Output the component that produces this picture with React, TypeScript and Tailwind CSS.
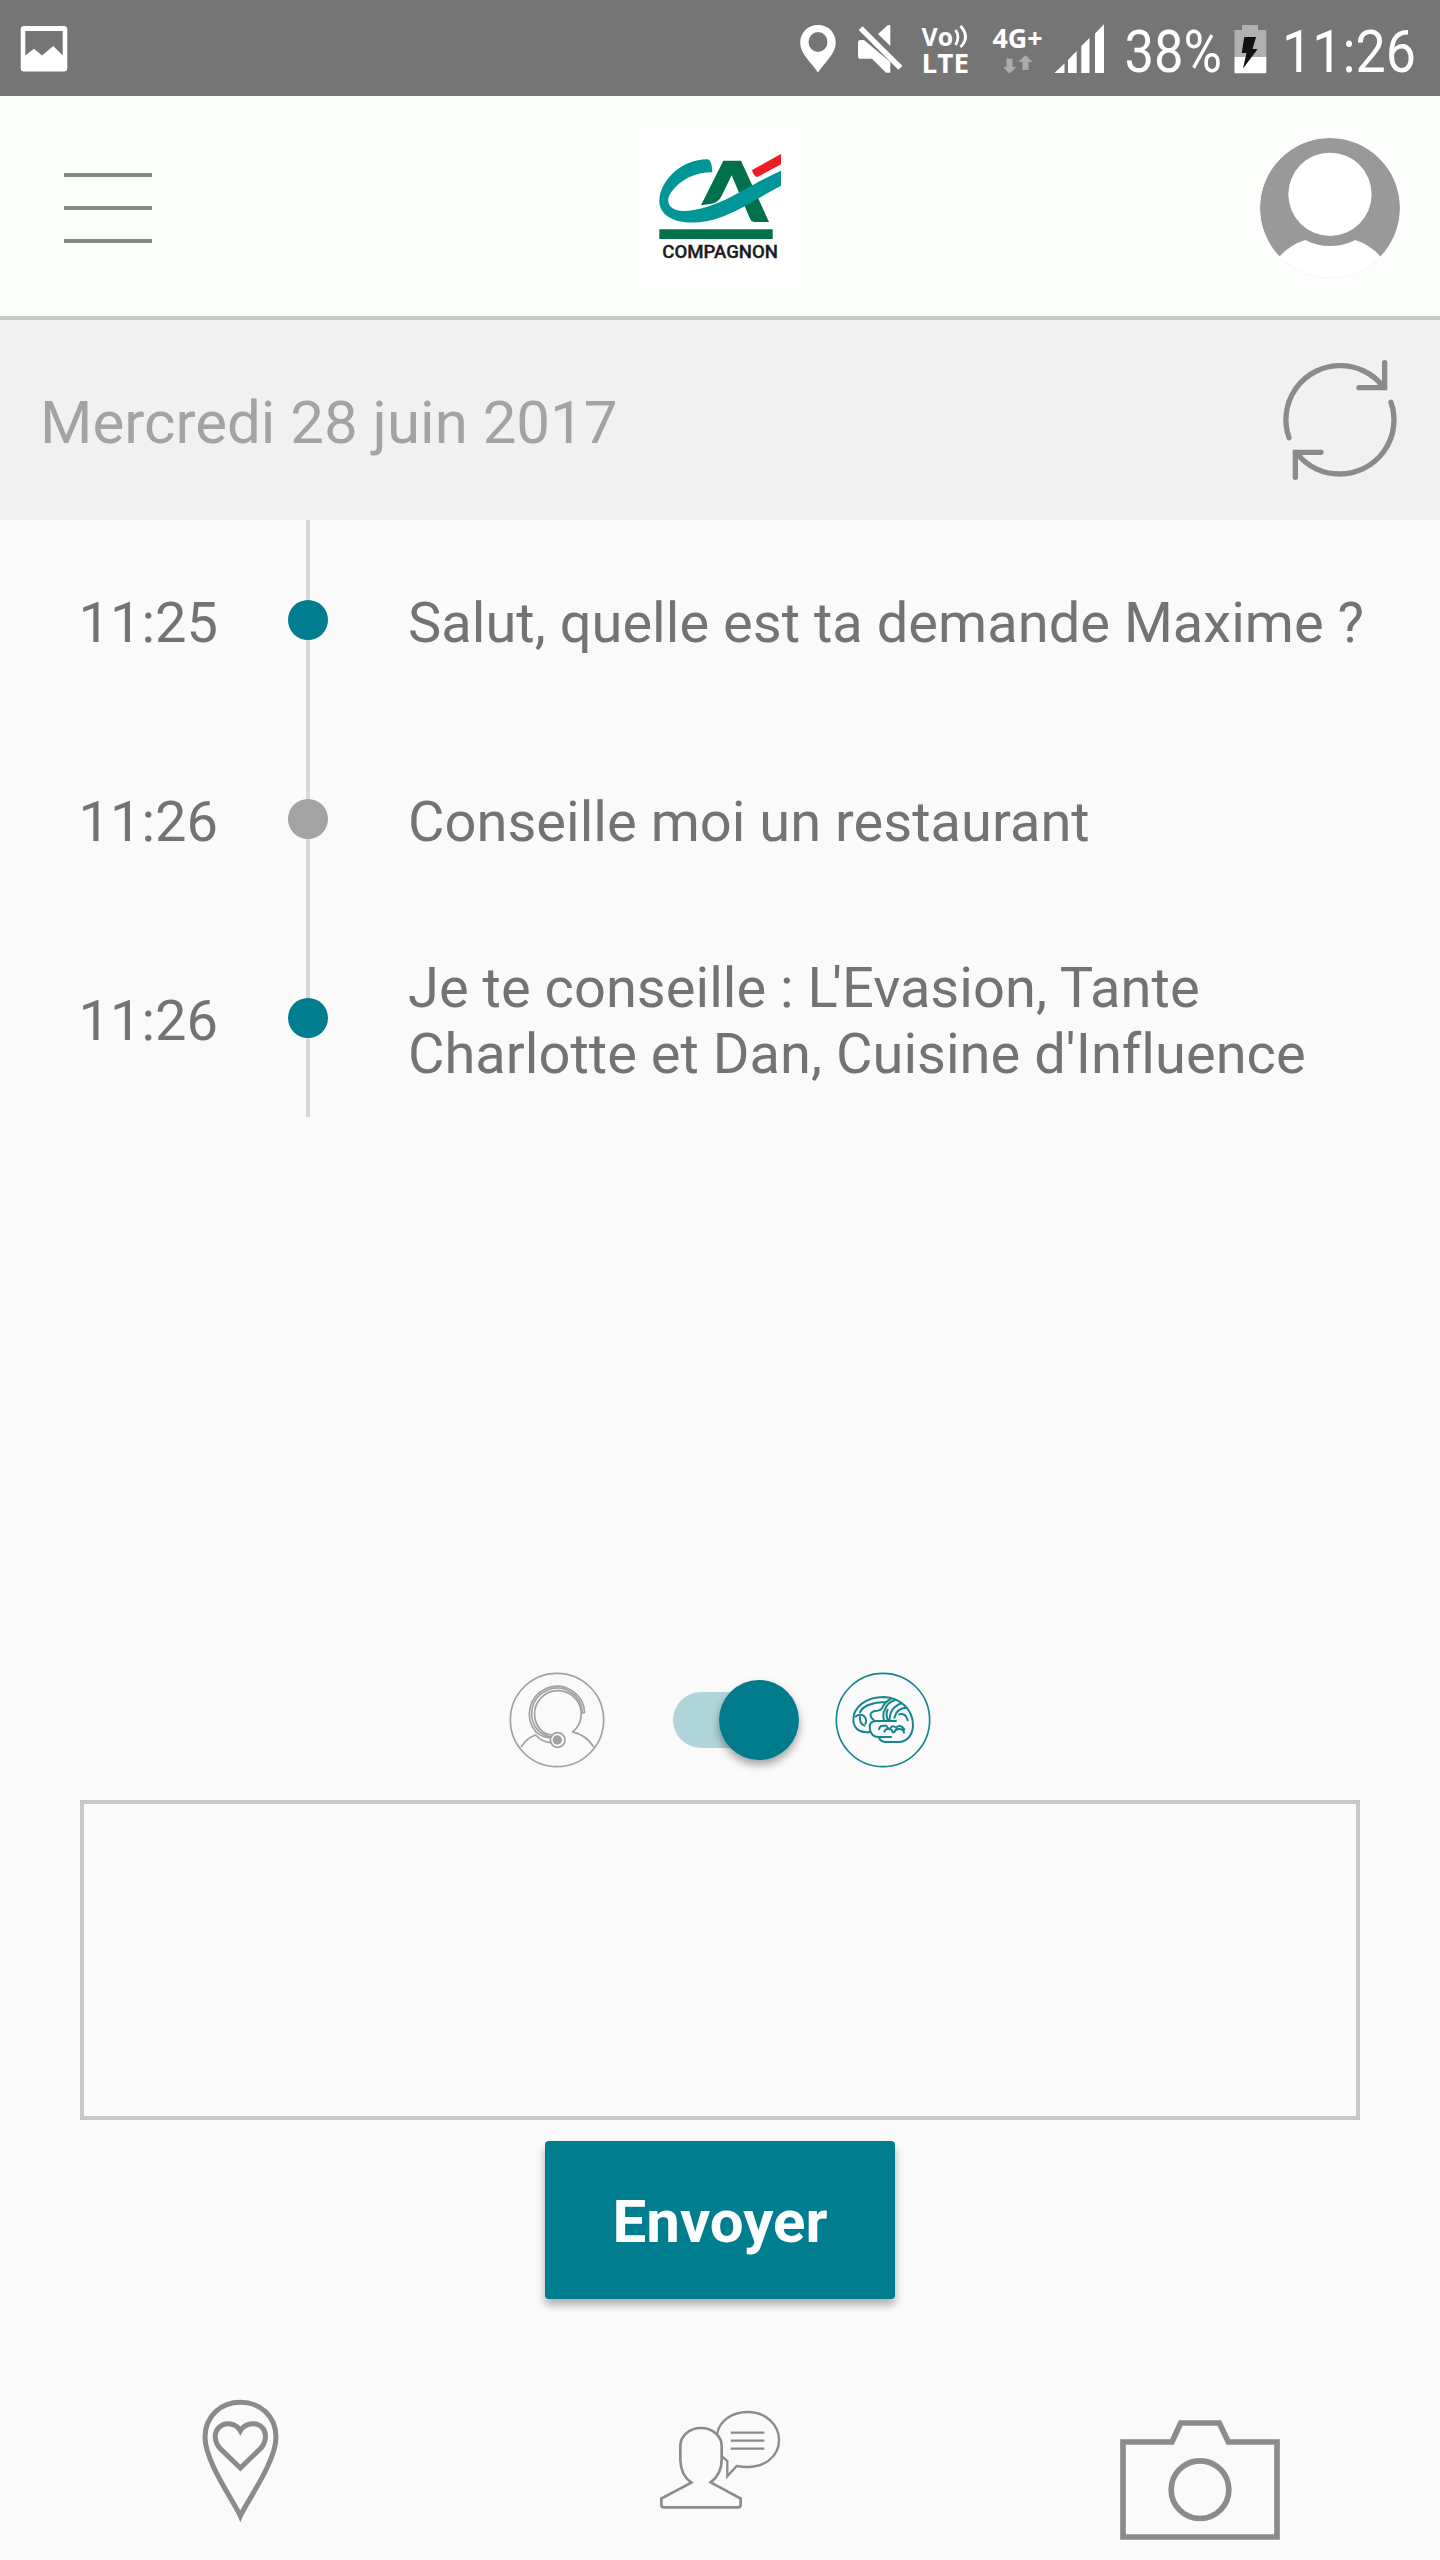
import React from "react";

const messages = [
  { time: "11:25", lines: ["Salut, quelle est ta demande Maxime ?"], bot: true },
  { time: "11:26", lines: ["Conseille moi un restaurant"], bot: false },
  {
    time: "11:26",
    lines: [
      <>
        Je te conseille : <span className="tracking-[-0.1em]">L</span>'Evasion, Tante
      </>,
      "Charlotte et Dan, Cuisine d'Influence",
    ],
    bot: true,
  },
];

function StatusBar() {
  return (
    <div className="flex h-24 shrink-0 items-center justify-between bg-[#757575]">
      <svg className="h-24 w-24" viewBox="0 0 96 96" fill="#fff">
        <path fillRule="evenodd" d="M24 26H64Q67.3 26 67.3 29.500V68Q67.3 71.500 64 71.500H24Q20.700 71.500 20.700 68V29.500Q20.700 26 24 26ZM25.300 31V55.500L34 48.700L42 55.500L53.300 46L62.700 55.500V31Z" />
      </svg>
      <svg className="h-24 w-[660px]" viewBox="780 0 660 96" fill="#fff">
        <path fillRule="evenodd" d="M818 25C807 25 800.200 33 800.200 43C800.200 54 812 63 818 72.500C824 63 835.700 54 835.700 43C835.700 33 829 25 818 25ZM818 32A9.500 10 0 1 1 818 52A9.500 10 0 1 1 818 32Z" />
        <path d="M858.700 30L862.500 26.300L902.500 66L898.300 69.700Z" />
        <path d="M878 34L888 25H890.300V46Z" />
        <path d="M864 40H860Q858 40 858 42.500V56.500Q858 58.700 860 58.700H872L886 72.700H890.300V62Z" />
        <g fontFamily="'Open Sans', 'Noto Sans', sans-serif" fontWeight="700">
          <text x="921.500" y="46" fontSize="24.500" textLength="31.500" lengthAdjust="spacingAndGlyphs">Vo</text>
          <text x="921.500" y="72.700" fontSize="27" textLength="47.500" lengthAdjust="spacingAndGlyphs">LTE</text>
          <text x="992.500" y="47.700" fontSize="26.500" textLength="50" lengthAdjust="spacingAndGlyphs">4G+</text>
        </g>
        <path d="M955.500 30Q960.500 37 955.500 45M960.500 26Q970.500 37 960.500 47" fill="none" stroke="#fff" strokeWidth="2.800" />
        <path fill="#acacac" d="M1006.500 58.500H1012.500V67H1016.500L1009.500 73.500L1003 67H1006.500ZM1022.500 70V62H1018L1025.500 55.300L1032.500 62H1028.500V70Z" />
        <path d="M1054.400 73L1064.500 63.500V73ZM1068 60L1076.700 51V73H1068ZM1081.300 46L1089.500 38V73H1081.300ZM1095 33.500L1104 24.300V73H1095Z" />
        <g fontFamily="Roboto, sans-serif" fontSize="60">
          <text x="1124.500" y="71.700" textLength="97.500" lengthAdjust="spacingAndGlyphs">38%</text>
          <text x="1282" y="71.700" textLength="134" lengthAdjust="spacingAndGlyphs">11:26</text>
        </g>
        <path fill="#b0b0b0" d="M1242 25H1258V30H1266.300V57H1234.500V30H1242Z" />
        <path d="M1234.500 57H1266.300V73.300H1234.500Z" />
        <path fill="#111" d="M1244.300 37H1256L1252.600 49H1257.700L1243 68.500L1246.500 53H1241.700Z" />
      </svg>
    </div>
  );
}

function Logo() {
  return (
    <svg className="h-40 w-40 bg-white" viewBox="30 24 480 480">
      <path fill="#00704d" d="M280 122H333L417 306H372Q364 305 360 296L305 166L275 227Q265 249 240 252L213 256Z" />
      <path fill="#009597" d="M234 118Q246 122 247 157C195 157 152 178 124 216C104 244 116 272 160 273C205 273 258 254 308 228C342 210 400 176 453 152V197C375 238 310 287 230 304C150 317 88 294 88 242C90 178 160 116 234 118Z" />
      <path fill="#ed1c24" d="M366 150L453 102V133L384 170Q373 174 366 150Z" />
      <path fill="#00704d" d="M88 328H428V357H88Z" />
      <text x="97" y="414" fontFamily="Roboto, sans-serif" fontWeight="500" fontSize="53" fill="#1c1c1c" stroke="#1c1c1c" strokeWidth="1" textLength="347" lengthAdjust="spacingAndGlyphs">COMPAGNON</text>
    </svg>
  );
}

function Header() {
  return (
    <header className="grid h-56 shrink-0 grid-cols-3 items-center border-b-4 border-[#c8cac6] bg-[#fcfefb]">
      <div className="mt-1 ml-16 flex w-[88px] flex-col gap-[29px]">
        <div className="h-1 bg-[#868984]" />
        <div className="h-1 bg-[#868984]" />
        <div className="h-1 bg-[#868984]" />
      </div>
      <div className="justify-self-center pt-1">
        <Logo />
      </div>
      <svg className="mt-1 mr-10 h-[140px] w-[140px] justify-self-end" viewBox="120 90 420 420">
        <clipPath id="disc"><circle cx="330" cy="300" r="210" /></clipPath>
        <g clipPath="url(#disc)">
          <circle cx="330" cy="300" r="210" fill="#999" />
          <path fill="#fff" d="M178 446Q210 410 256 396Q290 414 330 414Q370 414 406 396Q450 410 482 446L540 520H120Z" />
          <circle cx="330" cy="259" r="125" fill="#fff" />
        </g>
      </svg>
    </header>
  );
}

function DateBar() {
  return (
    <div className="flex h-[200px] shrink-0 items-center justify-between bg-[#f1f1f1] pr-10 pl-10">
      <span className="pt-[6px] text-[60px] leading-[70px] text-[#a3a3a3]">Mercredi 28 juin 2017</span>
      <svg className="h-[120px] w-[120px]" viewBox="180 750 360 360" fill="none" stroke="#8b8b8b" strokeWidth="16" strokeLinecap="round">
        <path d="M207 983A162 162 0 0 1 360 767A162 162 0 0 1 489 829M513 877A162 162 0 0 1 360 1092A162 162 0 0 1 231 1031" />
        <path d="M494 758V833H417M226 1102V1027H303" />
      </svg>
    </div>
  );
}

function Timeline() {
  return (
    <main className="flex-1">
      {messages.map((m, i) => (
        <div key={i} className="flex h-[199px] text-[56px] leading-[66px] text-[#737373]">
          <div className="flex w-72 items-center justify-end pt-[6px] pr-[70px]">{m.time}</div>
          <div className="relative flex w-10 items-center justify-center">
            <div className="h-full w-1 bg-[#d8d8d8]" />
            <div className={m.bot ? "absolute size-10 rounded-full bg-[#007d8f]" : "absolute size-10 rounded-full bg-[#a3a3a3]"} />
          </div>
          <div className="flex flex-col justify-center pt-[6px] pl-20 tracking-[0.03px] whitespace-nowrap">
            {m.lines.map((line, j) => (
              <p key={j}>{line}</p>
            ))}
          </div>
        </div>
      ))}
    </main>
  );
}

function AdvisorIcon() {
  return (
    <svg className="size-24" viewBox="58 67 288 288" fill="none" stroke="#a0a0a0" strokeWidth="5">
      <circle cx="202" cy="211" r="140" />
      <path d="M285 190A83 83 0 1 0 140 248Q160 264 184 264M277 190H285M278 190A76 76 0 1 0 148 245Q166 259 186 262" />
      <path d="M248 248A70 70 0 1 0 160 247Q172 256 187 256" />
      <circle cx="204" cy="271" r="22" />
      <circle cx="203" cy="271" r="14" fill="#a0a0a0" stroke="none" />
      <path d="M94 292Q112 264 138 256Q158 278 183 279M247 246Q291 257 312 292" />
    </svg>
  );
}

function BrainIcon() {
  return (
    <svg className="size-24" viewBox="1036 67 288 288" fill="none" stroke="#15858f" strokeWidth="6" strokeLinecap="round" strokeLinejoin="round">
      <circle cx="1180" cy="211" r="140" strokeWidth="5" />
      <path d="M1140 247C1112 251 1092 238 1091 212C1090 172 1130 142 1182 142C1234 144 1270 182 1270 226C1270 256 1252 277 1226 277H1190Q1172 277 1168 264" />
      <path d="M1204 262H1166Q1145 262 1141 240Q1136 214 1160 214H1219" />
      <path d="M1111 188Q1118 171 1145 163Q1165 156 1186 158M1098 201Q1108 191 1122 198Q1134 209 1127 222M1111 202Q1109 222 1124 228" />
      <path d="M1203 148Q1184 158 1178 174Q1172 184 1154 184Q1136 190 1146 205L1154 213" />
      <path d="M1216 151Q1190 160 1185 182Q1178 193 1183 212M1194 180Q1187 195 1195 213M1236 160Q1207 172 1202 194L1199 211" />
      <path d="M1250 174Q1222 175 1214 204M1228 194Q1248 188 1254 212" />
      <path d="M1168 239Q1171 226 1182 229Q1191 224 1195 237M1184 246Q1187 237 1197 237Q1207 238 1209 248M1202 235Q1210 225 1219 234Q1232 222 1244 239M1213 248Q1218 236 1231 238Q1242 239 1243 249" />
    </svg>
  );
}

function ModeSwitch() {
  return (
    <div className="flex h-24 items-center pl-[509px]">
      <AdvisorIcon />
      <div className="relative ml-[68px] h-14 w-[126px]">
        <div className="h-14 w-[110px] rounded-full bg-[#afd4d9]" />
        <div className="absolute -top-3 left-[46px] size-20 rounded-full bg-[#007b8c] shadow-[0_5px_8px_rgba(0,0,0,0.35)]" />
      </div>
      <div className="ml-9">
        <BrainIcon />
      </div>
    </div>
  );
}

function BottomNav() {
  return (
    <nav className="grid h-[180px] shrink-0 grid-cols-3">
      <svg className="h-40 w-[120px] justify-self-center" viewBox="0 0 360 480" fill="none" stroke="#8b8b8b" strokeWidth="15">
        <path d="M181 408C162 365 75 245 75 172C75 106 125 67 181 67C239 67 288 106 288 172C288 245 200 365 181 408Z" />
        <path d="M181 264L123 208C104 190 99 159 117 142C137 123 169 131 181 152C193 131 227 123 246 142C263 160 258 190 239 208Z" />
      </svg>
      <svg className="mt-[10px] h-[140px] w-40 justify-self-center" viewBox="0 0 480 420" fill="none" stroke="#8b8b8b" strokeWidth="8">
        <path d="M183 114C146 114 121 140 121 168V210Q122 255 154 278L64 326V344Q64 352 73 352H293Q302 352 302 344V326L212 277Q245 252 245 210V168C245 140 220 114 183 114Z" />
        <path strokeWidth="7" d="M231 133C238 92 276 66 323 66C378 66 417 105 417 150C417 198 373 243 290 228L262 259V213L246 199M272 128H373M272 152H373M272 176H373" />
      </svg>
      <svg className="mt-5 h-40 w-[200px] justify-self-center" viewBox="0 0 600 480" fill="none" stroke="#8b8b8b" strokeWidth="17">
        <path d="M69 126H216L242 69H358L385 126H531V411H69Z" />
        <circle cx="300" cy="269" r="86.500" />
      </svg>
    </nav>
  );
}

export default function App() {
  return (
    <div className="flex h-[2560px] w-[1440px] flex-col overflow-hidden bg-[#fafafa] font-['Roboto',sans-serif]">
      <StatusBar />
      <Header />
      <DateBar />
      <Timeline />
      <section className="flex shrink-0 flex-col">
        <ModeSwitch />
        <textarea className="mx-20 mt-8 h-80 resize-none border-4 border-[#c8c8c8] bg-transparent p-6 text-[56px] text-[#737373] outline-none" />
        <button className="mt-[21px] h-[158px] w-[350px] self-center rounded-[4px] bg-[#007d8f] pt-1 text-[60px] font-bold text-white shadow-[0_6px_8px_rgba(0,0,0,0.3)]">Envoyer</button>
      </section>
      <div className="h-[81px] shrink-0" />
      <BottomNav />
    </div>
  );
}
